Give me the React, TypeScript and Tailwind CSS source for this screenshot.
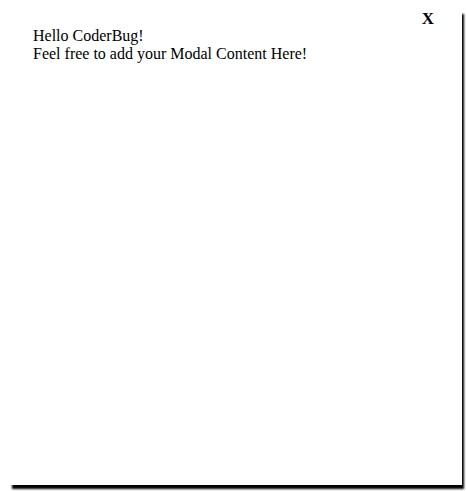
import React from 'react';

const Modal: React.FC = () => {
  return (
    <div className="relative w-[462px] h-[485px] bg-white shadow-[7px_9px_2px_-5px_#000]">
      {/* close button */}
      <span className="absolute right-[28px] top-[6px] text-[17px] font-bold cursor-pointer">X</span>
      <div className="pt-[27px] pl-[33px] text-[16px] leading-[18px]">
        <p>Hello CoderBug!</p>
        <p>Feel free to add your Modal Content Here!</p>
      </div>
    </div>
  );
};

export default function App() {
  return (
    <div className="w-[466px] h-[491px] bg-white text-black" style={{ fontFamily: '"Liberation Serif", serif' }}>
      <Modal />
    </div>
  );
}
